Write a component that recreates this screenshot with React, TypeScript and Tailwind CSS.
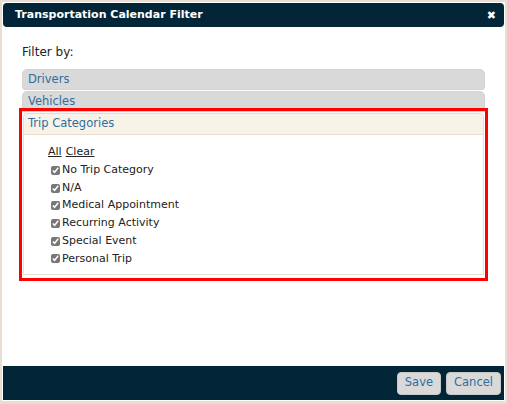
export default function App() {
  const items = ["No Trip Category", "N/A", "Medical Appointment", "Recurring Activity", "Special Event", "Personal Trip"];
  return (
    <div className="w-[507px] h-[404px] bg-[#e8ded4] p-[2px] pb-[3px] font-['DejaVu_Sans',sans-serif] text-[11px] text-[#222]">
      <div className="h-full bg-white flex flex-col p-[1px]">
        <div className="h-[24px] bg-[#022638] rounded-[4px] flex items-center justify-between pl-[12px] pr-[8px]">
          <span className="text-white font-bold text-[11px]">Transportation Calendar Filter</span>
          <span className="text-white font-bold text-[11px] leading-none">✖</span>
        </div>
        <div className="flex-1 px-[19px] pt-[16px]">
          <div className="mb-[8px] text-[12px]">Filter by:</div>
          <div className="h-[21px] bg-[#d9d9d9] border border-[#d3d3d3] rounded-t-[5px] rounded-b-[3px] text-[#2e6e9e] pl-[5px] flex items-center text-[11.5px]">Drivers</div>
          <div className="mt-[1px] h-[21px] bg-[#d9d9d9] border border-[#d3d3d3] rounded-t-[5px] text-[#2e6e9e] pl-[5px] flex items-center text-[11.5px]">Vehicles</div>
          <div className="-mx-[3px] -mt-[4px] border-[3px] border-[#ff0000] h-[173px] pt-[2px] px-[1px]">
            <div className="h-[22px] bg-[#f8f3e8] border border-[#ecdccb] rounded-t-[4px] text-[#2e6e9e] pl-[4px] flex items-center text-[11.5px]">Trip Categories</div>
            <div className="h-[140px] border border-t-0 border-[#e6e0d8] pl-[24px] pt-[9px]">
              <div className="flex gap-[4px] underline text-[#222]">
                <span>All</span>
                <span>Clear</span>
              </div>
              <div className="mt-[1px] flex flex-col">
                {items.map((t) => (
                  <label key={t} className="flex items-center h-[17.7px] pl-[3px] gap-[2px]">
                    <input type="checkbox" defaultChecked className="w-[9px] h-[9px] m-0 accent-[#777] grayscale" />
                    <span>{t}</span>
                  </label>
                ))}
              </div>
            </div>
          </div>
        </div>
        <div className="h-[34px] bg-[#022638] flex items-center justify-end gap-[5px] pr-[3px]">
          <button className="h-[23px] px-[7px] bg-[#d9d9d9] border border-[#c8c8c8] rounded-[4px] text-[#2e6e9e] text-[11.5px]">Save</button>
          <button className="h-[23px] px-[7px] bg-[#d9d9d9] border border-[#c8c8c8] rounded-[4px] text-[#2e6e9e] text-[11.5px]">Cancel</button>
        </div>
      </div>
    </div>
  );
}
